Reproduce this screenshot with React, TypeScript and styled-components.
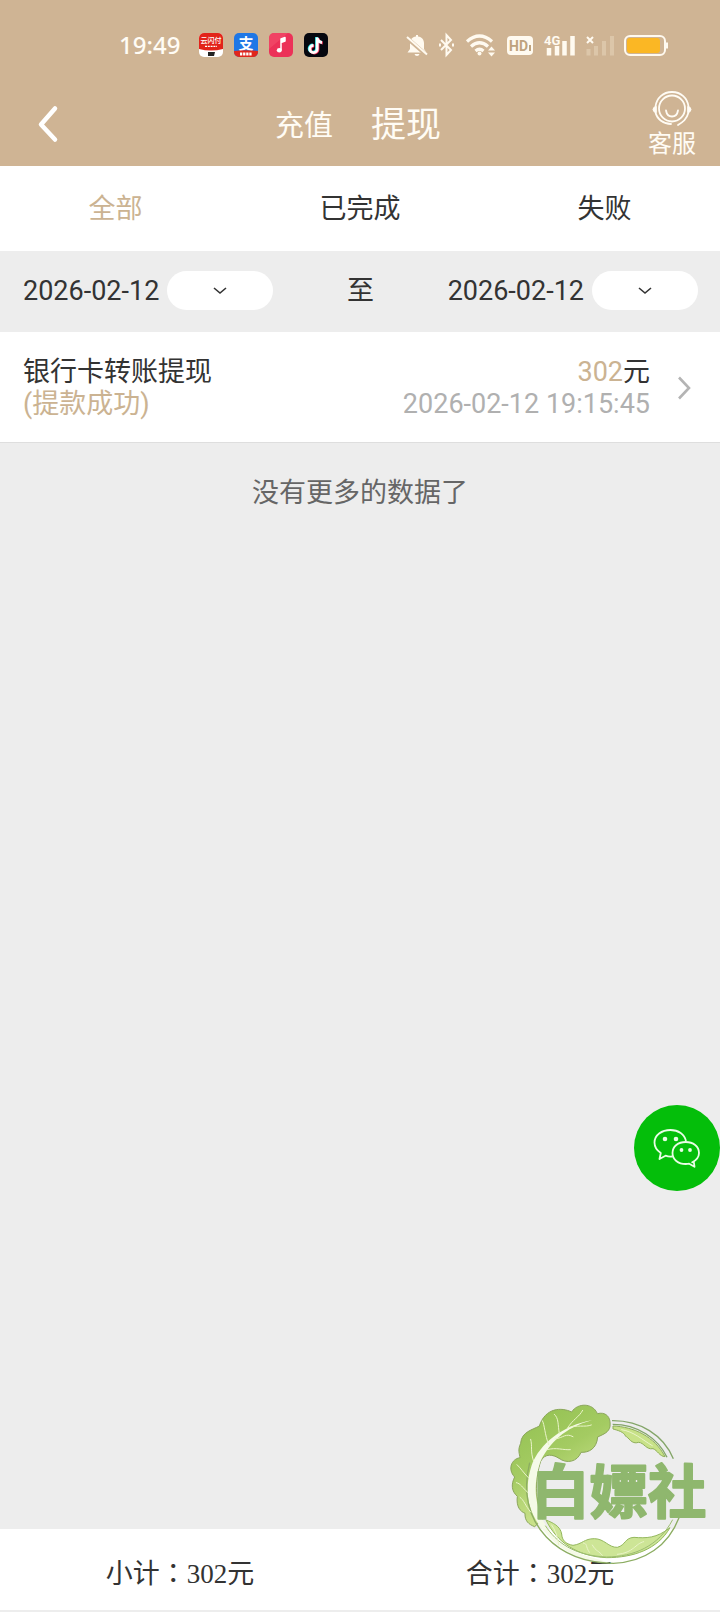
import { useState } from 'react';
import styled, { createGlobalStyle } from 'styled-components';

const GlobalStyle = createGlobalStyle`
  * {
    box-sizing: border-box;
  }

  body {
    margin: 0;
    background: #ededed;
    color: #333;
    font-family: Roboto, 'Noto Sans CJK SC', sans-serif;
    font-size: 27px;
    line-height: 32px;
  }

  button {
    padding: 0;
    border: 0;
    background: none;
    color: inherit;
    font: inherit;
    cursor: pointer;
  }

  svg {
    display: block;
    flex: none;
    overflow: visible;
  }
`;

const Page = styled.div`
  min-height: 100vh;
  display: flex;
  flex-direction: column;
`;

const Header = styled.header`
  background: #cfb494;
  color: #fffcf5;
`;

const StatusBar = styled.div`
  height: 84px;
  padding: 6px 52px 0 119px;
  display: flex;
  align-items: center;
  justify-content: space-between;
`;

const StatusGroup = styled.div<{ $gap: number }>`
  display: flex;
  align-items: center;
  gap: ${props => props.$gap}px;
`;

const Clock = styled.span`
  margin-right: 8px;
  font-family: 'Noto Sans', sans-serif;
  font-size: 24px;
  font-weight: 500;
`;

const NavBar = styled.nav`
  height: 82px;
  padding: 0 24px 0 20px;
  display: grid;
  grid-template-columns: 1fr auto 1fr;
  align-items: center;
`;

const BackButton = styled.button`
  justify-self: start;

  && {
    padding: 0 16px;
  }
`;

const NavTabs = styled.div`
  padding-top: 2px;
  display: flex;
  align-items: center;
  gap: 38px;
`;

const NavTab = styled.button<{ $active?: boolean }>`
  && {
    font-size: ${props => (props.$active ? 35 : 29)}px;
    line-height: 40px;
  }
`;

const ServiceButton = styled.button`
  justify-self: end;
  display: flex;
  flex-direction: column;
  align-items: center;

  && {
    font-size: 24px;
    line-height: 32px;
  }
`;

const FilterTabs = styled.div`
  height: 85px;
  display: flex;
  align-items: center;
  justify-content: space-around;
  background: #fff;
`;

const FilterTab = styled.button<{ $active: boolean }>`
  && {
    color: ${props => (props.$active ? '#cbb392' : '#333')};
  }
`;

const DateBar = styled.div`
  height: 81px;
  padding: 0 22px 2px 23px;
  display: flex;
  align-items: center;
  justify-content: space-between;
`;

const DateField = styled.div`
  display: flex;
  align-items: center;
  gap: 8px;
`;

const SelectBox = styled.div`
  width: 106px;
  height: 39px;
  display: grid;
  align-items: center;
  justify-items: center;

  & > * {
    grid-area: 1 / 1;
  }

  & > svg {
    pointer-events: none;
  }
`;

const DateSelect = styled.select`
  width: 100%;
  height: 100%;
  appearance: none;
  border: 0;
  border-radius: 20px;
  background: #fff;
  font: inherit;
`;

const RecordList = styled.ul`
  margin: 0;
  padding: 0;
  list-style: none;
`;

const RecordItem = styled.li`
  padding: 24px 28px 22px 23px;
  display: flex;
  align-items: center;
  gap: 28px;
  background: #fff;
  border-bottom: 1px solid #dedede;
`;

const RecordColumn = styled.div<{ $right?: boolean }>`
  flex: ${props => (props.$right ? 'none' : 1)};
  display: flex;
  flex-direction: column;
  text-align: ${props => (props.$right ? 'right' : 'left')};
`;

const Gold = styled.span`
  color: #cbb392;
`;

const Time = styled.time`
  color: #b0b0b0;
`;

const NoMore = styled.p`
  margin: 0;
  padding: 34px 0;
  color: #666;
  text-align: center;
`;

const Footer = styled.footer`
  height: 83px;
  margin-top: auto;
  padding-top: 8px;
  display: flex;
  align-items: center;
  background: #fff;
  border-bottom: 2px solid #ededed;
  font-family: 'Liberation Serif', 'Noto Sans CJK TC', serif;
`;

const Total = styled.div`
  flex: 1;
  text-align: center;
`;

const WechatButton = styled.button`
  position: fixed;
  right: 0;
  bottom: 421px;
  width: 86px;
  height: 86px;
  display: flex;
  align-items: center;
  justify-content: center;

  && {
    border-radius: 50%;
    background: #04be0a;
  }
`;

const Watermark = styled.div`
  position: fixed;
  right: 0;
  bottom: 42px;
  pointer-events: none;
`;

const cjk = "'Noto Sans CJK SC', sans-serif";

const UnionPayIcon = () => (
  <svg width="24" height="24" viewBox="0 0 24 24">
    <rect width="24" height="24" rx="5" fill="#fff" />
    <path d="M0 16V5a5 5 0 0 1 5-5h14a5 5 0 0 1 5 5v11q-12 3-24 0z" fill="#e2231a" />
    <text x="12" y="10" fontSize="7" fontWeight="500" textAnchor="middle" fill="#fff" fontFamily={cjk}>云闪付</text>
    <path d="M6 13.4h12" stroke="#fff" strokeWidth="1.2" strokeDasharray="2 .8" />
    <path d="M9 19h7l-1 4H9z" fill="#222" />
  </svg>
);

const AlipayIcon = () => (
  <svg width="24" height="24" viewBox="0 0 24 24">
    <rect width="24" height="24" rx="5" fill="#1f77e6" />
    <text x="12" y="16" fontSize="15" fontWeight="700" textAnchor="middle" fill="#fff" fontFamily={cjk}>支</text>
    <path d="M0 18q12-1.5 24 0v1a5 5 0 0 1-5 5H5a5 5 0 0 1-5-5z" fill="#e0261c" />
    <path d="M6 21h12" stroke="#fff" strokeWidth="3" strokeDasharray="2.3 .8" />
  </svg>
);

const MusicIcon = () => (
  <svg width="24" height="24" viewBox="0 0 24 24">
    <rect width="24" height="24" rx="5" fill="#ec3158" />
    <path d="M0 5a5 5 0 0 1 5-5h14L0 16z" fill="#f4506d" opacity=".6" />
    <path d="M12 17V6l4-1.500v3.500L12 9.500" fill="#fff" stroke="#fff" strokeWidth="1.500" strokeLinejoin="round" />
    <ellipse cx="10.300" cy="17.300" rx="2.500" ry="2.200" fill="#fff" />
  </svg>
);

const TiktokIcon = () => (
  <svg width="24" height="24" viewBox="0 0 24 24">
    <rect width="24" height="24" rx="5" fill="#06070f" />
    <g fill="none" strokeWidth="2.8">
      <path d="M12.5 4v11.5a3.7 3.7 0 1 1-3.7-3.7M12.5 4.5q.8 4 4.800 4.500" stroke="#25e5e8" />
      <path d="M14 5v11.5a3.7 3.7 0 1 1-3.7-3.7M14 5.5q.8 4 4.800 4.500" stroke="#f7345f" />
      <path d="M13.2 4.5V16a3.7 3.7 0 1 1-3.7-3.7M13.2 5q.8 4 4.800 4.500" stroke="#fff" />
    </g>
  </svg>
);

const MuteIcon = () => (
  <svg width="22" height="24" viewBox="0 0 22 24" fill="#fffaf0">
    <path d="M10 3.5V2h2v1.5c4 .6 6 3.300 6 7V16l2.500 3.500h-19L4 16v-5.500c0-3.700 2-6.400 6-7zM8.500 21h5q-.5 2-2.500 2t-2.500-2z" />
    <path d="M1 5l20 17.500" stroke="#cfb494" strokeWidth="4" />
    <path d="M1 4l20 17.500" stroke="#fffaf0" strokeWidth="2" />
  </svg>
);

const BluetoothIcon = () => (
  <svg width="18" height="24" viewBox="0 0 18 24" fill="none" stroke="#fffaf0" strokeWidth="2">
    <path d="M3 7l10 10-4.500 5V2L13 7 3 17" />
    <path d="M2 10.500v3M15 10.500v3" />
  </svg>
);

const WifiIcon = () => (
  <svg width="30" height="24" viewBox="0 0 30 24" fill="none" stroke="#fffaf0" strokeWidth="3.2">
    <path d="M1 8.500q12.500-11 25 0M5 13.500q8.500-7.500 17 0M9.500 18q4-3.500 8 0" />
    <circle cx="13.5" cy="20.5" r="2" fill="#fffaf0" stroke="none" />
    <path d="M22 17.500l3.500-4 3.500 4zM22 19.500l3.500 4 3.500-4z" fill="#fffaf0" stroke="none" />
  </svg>
);

const HdIcon = () => (
  <svg width="28" height="24" viewBox="0 0 28 24">
    <rect x="1" y="3" width="26" height="19" rx="4" fill="#fffaf0" />
    <text x="3" y="18" fontSize="14" fontWeight="700" fill="#bfa37e" fontFamily="Roboto, sans-serif">HD</text>
    <path d="M24 12v6" stroke="#bfa37e" strokeWidth="2" />
  </svg>
);

const SignalIcon = () => (
  <svg width="32" height="24" viewBox="0 0 32 24">
    <path d="M5 15v7.500M13 13v9.500M20.500 8v14.500M28.500 3v19.500" stroke="#fffaf0" strokeWidth="4.500" />
    <text x="0" y="12" fontSize="13" fontWeight="700" fill="#fffaf0" stroke="#cfb494" strokeWidth="2" paintOrder="stroke" fontFamily="Roboto, sans-serif">4G</text>
  </svg>
);

const NoSignalIcon = () => (
  <svg width="28" height="24" viewBox="0 0 28 24">
    <path d="M2.500 16v6.500M10 13v9.500M18 8v14.500M26 3v19.500" stroke="#dcc6a9" strokeWidth="4" />
    <path d="M1 4l6 6M7 4l-6 6" stroke="#fffaf0" strokeWidth="2" />
  </svg>
);

const BatteryIcon = () => (
  <svg width="44" height="24" viewBox="0 0 44 24">
    <rect x="1" y="3" width="40" height="19" rx="5" fill="none" stroke="#fffaf0" strokeWidth="2" />
    <rect x="3" y="5" width="33" height="15" rx="3" fill="#fbb724" />
    <path d="M43 9.500v6" stroke="#fffaf0" strokeWidth="2" />
  </svg>
);

const BackIcon = () => (
  <svg width="24" height="40" viewBox="0 0 24 40" fill="none" stroke="#fff" strokeWidth="4.500" strokeLinecap="round" strokeLinejoin="round">
    <path d="M19 3.500L5 19.500l14 15" />
  </svg>
);

const ServiceIcon = () => (
  <svg width="40" height="38" viewBox="0 0 40 38" fill="none" stroke="#fffcf5" strokeWidth="1.8" strokeLinecap="round">
    <circle cx="20" cy="18.5" r="13" />
    <path d="M3.500 16.500C4.500 8 11 2 20 2s15.500 6 16.500 14.500M3.500 22.500C5 29 11.500 34 19 34M36.500 22.500c-2 7-5.500 9.500-10.500 12.500" />
    <path d="M4 16.500q-3 .5-3 3t3 3zM36 16.500q3 .5 3 3t-3 3z" fill="#fffcf5" strokeWidth="1" />
    <path d="M14 20.500q1 6 6 6t6-6" />
  </svg>
);

const DownIcon = () => (
  <svg width="14" height="8" viewBox="0 0 14 8" fill="none" stroke="#333" strokeWidth="1.6">
    <path d="M1 1l6 5L13 1" />
  </svg>
);

const RightIcon = () => (
  <svg width="14" height="24" viewBox="0 0 14 24" fill="none" stroke="#b4b4b4" strokeWidth="2.6">
    <path d="M1 1.500L11 12 1 22.500" />
  </svg>
);

const WechatIcon = () => (
  <svg width="48" height="42" viewBox="0 0 48 42" fill="none" stroke="#e9fde6" strokeWidth="1.8" strokeLinejoin="round">
    <path d="M19.500 29.500q-3.500.5-7-.8L6.500 32l1.300-6C4 23.500 1.500 19.700 1.500 15.500 1.500 8.300 8.500 3 17.500 3 25.500 3 31.500 7.300 33 14" />
    <path d="M38.500 35.800c4.700-2.300 7.500-5.500 7.500-9.800 0-6.500-5.800-11-13.300-11S19.500 19.500 19.500 26s5.700 11 13.200 11q1.800 0 3.500-.3l5.300 3-.7-4.700" />
    <g fill="#e9fde6" stroke="none">
      <circle cx="12" cy="12" r="2.3" />
      <circle cx="23" cy="12" r="2.3" />
      <circle cx="28.5" cy="23" r="1.9" />
      <circle cx="37" cy="23" r="1.9" />
    </g>
  </svg>
);

const CabbageLogo = () => (
  <svg width="230" height="180" viewBox="0 0 690 540">
    <defs>
      <linearGradient id="leaf" x1="0" y1="0" x2=".5" y2="1">
        <stop offset="0" stopColor="#8fbf4e" />
        <stop offset=".5" stopColor="#a4cb62" />
        <stop offset="1" stopColor="#d6e998" />
      </linearGradient>
    </defs>
    <path
      d="M360 110C364 78 345 65 322 71C309 38 262 38 245 66C214 51 166 53 148 108C129 119 94 125 92 160C82 180 89 193 90 203C64 207 52 238 74 261C63 283 64 303 82 319C78 351 91 364 105 370C104 393 116 403 134 410L160 385C132 330 137 260 152 214C165 188 190 194 207 205C230 222 262 216 273 187C297 188 320 176 323 141C342 132 356 127 360 110Z"
      fill="url(#leaf)" stroke="#8aa55a" strokeWidth="3"
    />
    <path d="M168 390C188 398 211 408 215 432C216 450 226 462 249 466C278 462 282 446 313 446C343 446 356 473 382 472C408 465 403 444 432 442C468 445 500 445 540 413C503 478 430 503 350 503C260 499 200 456 168 390Z" fill="#cde596" stroke="#93b75c" strokeWidth="3" />
    <path d="M369 108C430 110 494 139 525 200C508 199 503 181 489 176C469 180 462 158 446 157C424 165 415 140 407 139C402 126 384 121 369 117Z" fill="#c8e288" stroke="#8eae58" strokeWidth="3" />
    <path d="M306 91C220 105 148 162 125 226C98 310 117 376 169 431C221 492 289 516 360 520C309 500 239 493 193 442C140 377 122 304 151 215C179 159 223 113 306 91Z" fill="#f5fae7" />
    <path d="M119 218C99 301 111 379 169 441C223 498 300 519 370 520C464 516 535 467 567 383" fill="none" stroke="#8cad62" strokeWidth="4" />
    <path d="M548 389C506 469 432 500 350 501C251 497 199 457 166 407" fill="none" stroke="#9cbd70" strokeWidth="3" />
    <path d="M366 92C450 91 520 135 550 206M368 103C443 103 504 145 531 202" fill="none" stroke="#83a568" strokeWidth="4" />
    <g fill="none" stroke="#eaf4c9" strokeWidth="3" strokeLinecap="round">
      <path d="M176 164C164 134 164 103 157 92M208 131C203 104 207 85 193 73M233 114C248 88 267 82 278 61M233 114C260 103 286 113 304 105M195 147C222 143 227 128 249 140M171 179C199 171 220 181 241 179M131 214C120 184 128 169 122 148M115 263C99 247 92 234 81 224M113 307C97 293 92 280 79 278M122 366C105 346 102 330 90 322" />
      <path d="M206 465C204 441 195 419 185 405M298 487C285 467 294 462 280 459M337 496C327 482 318 485 307 465M382 493C432 488 435 461 461 455M487 167C456 149 432 125 395 119" />
    </g>
    <text x="124" y="370" fontSize="175" fontWeight="700" fontFamily={cjk} fill="#8fb76e" stroke="#8fb76e" strokeWidth="6" strokeLinejoin="round">白嫖社</text>
  </svg>
);

const filters = ['全部', '已完成', '失败'];

const records = [
  { id: 1, name: '银行卡转账提现', status: '(提款成功)', amount: 302, time: '2026-02-12 19:15:45' },
];

interface IDatePickProps {
  id: string;
  value: string;
}

const DatePick = ({ id, value }: IDatePickProps) => (
  <DateField>
    <label htmlFor={id}>{value}</label>
    <SelectBox>
      <DateSelect id={id} defaultValue={value}>
        <option value={value} aria-label={value}></option>
      </DateSelect>
      <DownIcon />
    </SelectBox>
  </DateField>
);

const App = () => {
  const [filter, setFilter] = useState('全部');

  return (
    <Page>
      <GlobalStyle />
      <Header>
        <StatusBar>
          <StatusGroup $gap={11}>
            <Clock>19:49</Clock>
            <UnionPayIcon />
            <AlipayIcon />
            <MusicIcon />
            <TiktokIcon />
          </StatusGroup>
          <StatusGroup $gap={10}>
            <MuteIcon />
            <BluetoothIcon />
            <WifiIcon />
            <HdIcon />
            <SignalIcon />
            <NoSignalIcon />
            <BatteryIcon />
          </StatusGroup>
        </StatusBar>
        <NavBar>
          <BackButton type="button" aria-label="返回"><BackIcon /></BackButton>
          <NavTabs>
            <NavTab type="button">充值</NavTab>
            <NavTab type="button" $active>提现</NavTab>
          </NavTabs>
          <ServiceButton type="button">
            <ServiceIcon />
            客服
          </ServiceButton>
        </NavBar>
      </Header>
      <FilterTabs>
        {
          filters.map(
            name => <FilterTab key={name} type="button" $active={name === filter} onClick={() => { setFilter(name); }}>{name}</FilterTab>)
        }
      </FilterTabs>
      <DateBar>
        <DatePick id="start-date" value="2026-02-12" />
        <span>至</span>
        <DatePick id="end-date" value="2026-02-12" />
      </DateBar>
      <RecordList>
        {
          records.map(record => (
            <RecordItem key={record.id}>
              <RecordColumn>
                <span>{record.name}</span>
                <Gold>{record.status}</Gold>
              </RecordColumn>
              <RecordColumn $right>
                <span><Gold>{record.amount}</Gold>元</span>
                <Time>{record.time}</Time>
              </RecordColumn>
              <RightIcon />
            </RecordItem>
          ))
        }
      </RecordList>
      <NoMore>没有更多的数据了</NoMore>
      <Footer>
        <Total>小计：302元</Total>
        <Total>合计：302元</Total>
      </Footer>
      <WechatButton type="button" aria-label="微信"><WechatIcon /></WechatButton>
      <Watermark><CabbageLogo /></Watermark>
    </Page>
  );
};

export default App;
